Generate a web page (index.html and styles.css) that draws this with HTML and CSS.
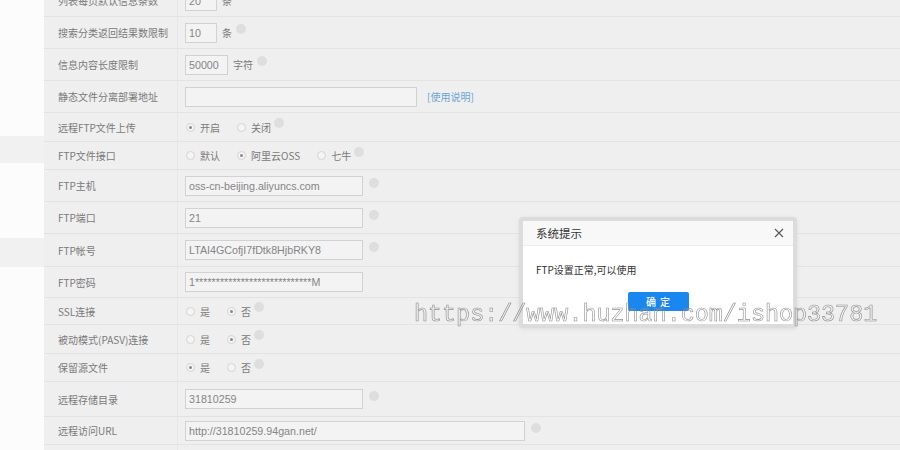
FILE: index.html
```html
<!DOCTYPE html>
<html lang="zh-CN">
<head>
<meta charset="utf-8">
<title>FTP设置</title>
<link rel="stylesheet" href="styles.css">
</head>
<body>
<div class="page">
  <aside class="side">
    <div class="band band-1"></div>
    <div class="band band-2"></div>
  </aside>
  <main class="form">
    <div class="row h32"><div class="lbl">列表每页默认信息条数</div><div class="val"><span class="inp w31">20</span><span class="unit">条</span></div></div>
    <div class="row h32"><div class="lbl">搜索分类返回结果数限制</div><div class="val"><span class="inp w31">10</span><span class="unit">条</span><i class="help"></i></div></div>
    <div class="row h32"><div class="lbl">信息内容长度限制</div><div class="val"><span class="inp w42">50000</span><span class="unit">字符</span><i class="help"></i></div></div>
    <div class="row h32"><div class="lbl">静态文件分离部署地址</div><div class="val"><span class="inp w231"></span><a class="link">[使用说明]</a></div></div>
    <div class="row h29"><div class="lbl">远程FTP文件上传</div><div class="val"><span class="radio on"></span><span class="rtxt">开启</span><span class="radio"></span><span class="rtxt">关闭</span><i class="help"></i></div></div>
    <div class="row h28"><div class="lbl">FTP文件接口</div><div class="val"><span class="radio"></span><span class="rtxt">默认</span><span class="radio on"></span><span class="rtxt">阿里云OSS</span><span class="radio"></span><span class="rtxt">七牛</span><i class="help"></i></div></div>
    <div class="row h32"><div class="lbl">FTP主机</div><div class="val"><span class="inp w177">oss-cn-beijing.aliyuncs.com</span><i class="help far"></i></div></div>
    <div class="row h32"><div class="lbl">FTP端口</div><div class="val"><span class="inp w177">21</span><i class="help far"></i></div></div>
    <div class="row h33"><div class="lbl">FTP帐号</div><div class="val"><span class="inp w177">LTAI4GCofjI7fDtk8HjbRKY8</span><i class="help far"></i></div></div>
    <div class="row h31"><div class="lbl">FTP密码</div><div class="val"><span class="inp w177">1****************************M</span></div></div>
    <div class="row h27"><div class="lbl">SSL连接</div><div class="val"><span class="radio"></span><span class="rtxt">是</span><span class="radio on"></span><span class="rtxt">否</span><i class="help"></i></div></div>
    <div class="row h29"><div class="lbl">被动模式(PASV)连接</div><div class="val"><span class="radio"></span><span class="rtxt">是</span><span class="radio on"></span><span class="rtxt">否</span><i class="help"></i></div></div>
    <div class="row h28"><div class="lbl">保留源文件</div><div class="val"><span class="radio on"></span><span class="rtxt">是</span><span class="radio"></span><span class="rtxt">否</span><i class="help"></i></div></div>
    <div class="row h35"><div class="lbl">远程存储目录</div><div class="val"><span class="inp w177">31810259</span><i class="help far"></i></div></div>
    <div class="row h28"><div class="lbl">远程访问URL</div><div class="val"><span class="inp w339">http://31810259.94gan.net/</span><i class="help far"></i></div></div>
    <div class="row h32"><div class="lbl"></div><div class="val"></div></div>
  </main>

  <div class="dialog">
    <div class="dlg-head">
      <span class="dlg-title">系统提示</span>
      <svg class="dlg-close" width="10" height="10" viewBox="0 0 10 10"><path d="M1 1L9 9M9 1L1 9" stroke="#555" stroke-width="1.1" fill="none"/></svg>
    </div>
    <div class="dlg-body">FTP设置正常,可以使用</div>
    <div class="dlg-foot"><span class="btn">确 定</span></div>
  </div>

  <div class="watermark">https://www.huzhan.com/ishop33781</div>
</div>
</body>
</html>
```

FILE: styles.css
```css
html, body {
  margin: 0;
  padding: 0;
  width: 900px;
  height: 450px;
  overflow: hidden;
  background: #fbfbfb;
  font-family: "Noto Sans CJK SC", "Liberation Sans", sans-serif;
}

.page {
  position: relative;
  display: flex;
  width: 900px;
  height: 450px;
  overflow: hidden;
}

.side {
  width: 44px;
  flex: none;
  display: flex;
  flex-direction: column;
  background: #fcfcfc;
}
.band { background: #f1f1f1; }
.band-1 { margin-top: 136px; height: 27px; }
.band-2 { margin-top: 75px; height: 29px; }

.form {
  flex: 1;
  margin-top: -15px;
  background: #efefef;
  display: flex;
  flex-direction: column;
}

.row {
  display: flex;
  border-bottom: 1px solid #e3e3e3;
  box-sizing: border-box;
  flex: none;
}
.h27 { height: 27px; }
.h28 { height: 28px; }
.h29 { height: 29px; }
.h31 { height: 31px; }
.h32 { height: 32px; }
.h33 { height: 33px; }
.h35 { height: 35px; }

.lbl {
  width: 134px;
  flex: none;
  box-sizing: border-box;
  padding-left: 14px;
  border-right: 1px solid #e6e6e6;
  display: flex;
  align-items: center;
  font-size: 10px;
  color: #7a7a7a;
  white-space: nowrap;
}

.val {
  flex: 1;
  display: flex;
  align-items: center;
  padding-left: 7px;
  font-size: 10px;
  color: #7a7a7a;
}

.inp {
  height: 20px;
  box-sizing: border-box;
  border: 1px solid #d2d2d2;
  background: #f3f3f3;
  font-family: "Liberation Sans", sans-serif;
  font-size: 10.7px;
  color: #858585;
  padding-left: 3px;
  display: flex;
  align-items: center;
  white-space: nowrap;
  overflow: hidden;
}
.w31 { width: 32px; }
.w42 { width: 43px; }
.w177 { width: 178px; }
.w231 { width: 232px; }
.w339 { width: 340px; }

.unit { margin-left: 5px; }

.help {
  width: 10px;
  height: 10px;
  border-radius: 50%;
  background: #dedede;
  margin-left: 4px;
  margin-top: -8px;
}
.help.far { margin-left: 6px; margin-top: -6px; }

.link {
  margin-left: 10px;
  color: #6aa3d8;
  font-size: 10px;
}

.radio {
  width: 9px;
  height: 9px;
  box-sizing: border-box;
  border-radius: 50%;
  border: 1px solid #d4d4d4;
  background: #f4f4f4;
  position: relative;
  margin-right: 5px;
  margin-left: 1px;
}
.radio.on::after {
  content: "";
  position: absolute;
  left: 2px;
  top: 2px;
  width: 3px;
  height: 3px;
  border-radius: 50%;
  background: #8a8a8a;
}
.rtxt { margin-right: 16px; }
.rtxt + .help { margin-left: -13px; }

.dialog {
  position: absolute;
  left: 519px;
  top: 217px;
  width: 278px;
  height: 111px;
  box-sizing: border-box;
  border: 4px solid #dcdcdc;
  border-radius: 4px;
  background: #ffffff;
  display: flex;
  flex-direction: column;
  box-shadow: 0 1px 4px rgba(0,0,0,0.08);
}
.dlg-head {
  height: 24px;
  flex: none;
  background: #f8f8f8;
  border-bottom: 1px solid #eeeeee;
  display: flex;
  align-items: center;
  justify-content: space-between;
  padding: 0 9px 0 13px;
}
.dlg-title {
  font-size: 11.5px;
  color: #333;
}
.dlg-close { display: block; }
.dlg-body {
  padding: 16px 13px 0;
  font-size: 10px;
  color: #333;
  height: 30px;
}
.dlg-foot {
  display: flex;
  justify-content: center;
}
.btn {
  width: 61px;
  height: 19px;
  background: #1a86f0;
  border-radius: 2px;
  color: #fff;
  font-size: 10px;
  font-weight: 500;
  letter-spacing: 1px;
  display: flex;
  align-items: center;
  justify-content: center;
  margin-left: 1px;
}

.watermark {
  position: absolute;
  left: 414px;
  top: 302px;
  font-family: "Liberation Mono", monospace;
  font-size: 23.4px;
  color: rgba(240,240,240,0.01);
  -webkit-text-stroke: 0.6px #8e8e8e;
  white-space: nowrap;
  letter-spacing: 0;
  will-change: transform;
  opacity: 0.99;
}
```
